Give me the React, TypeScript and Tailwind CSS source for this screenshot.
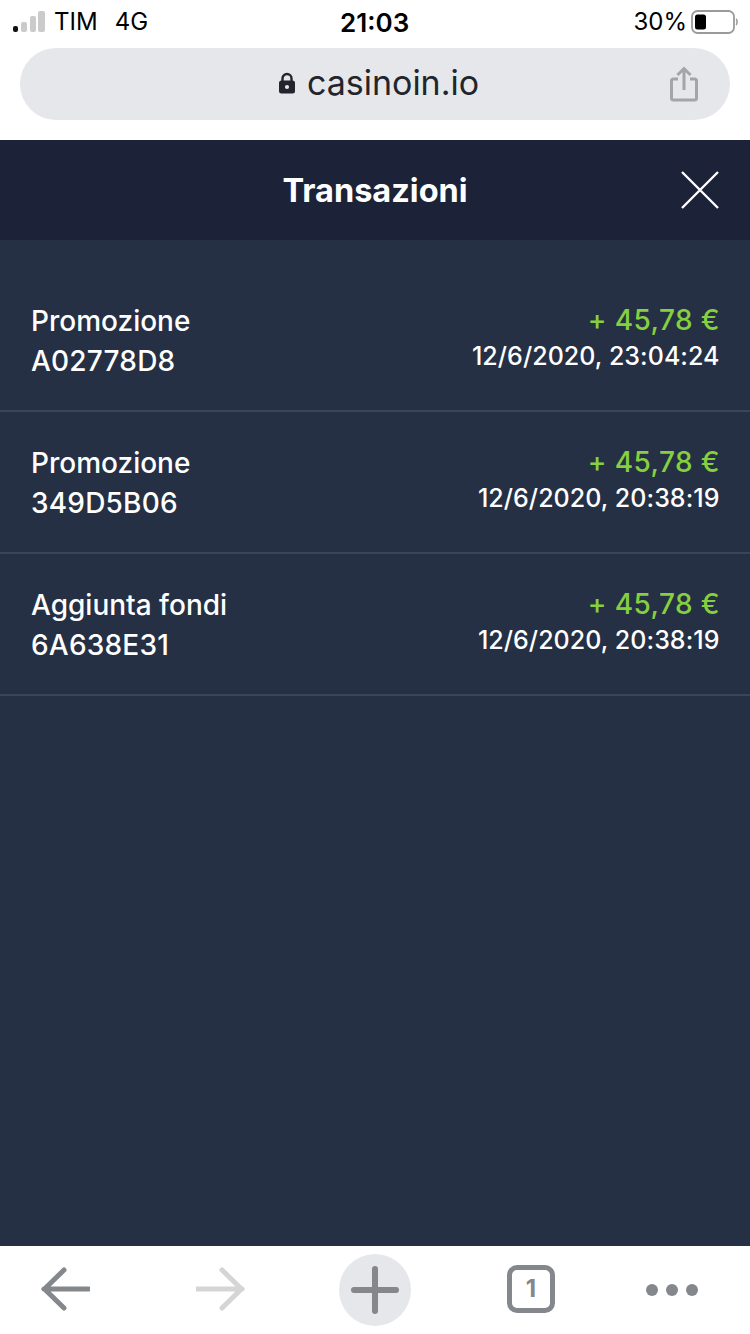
const rows = [
  { title: "Promozione", code: "A02778D8", amount: "+ 45,78 €", date: "12/6/2020, 23:04:24" },
  { title: "Promozione", code: "349D5B06", amount: "+ 45,78 €", date: "12/6/2020, 20:38:19" },
  { title: "Aggiunta fondi", code: "6A638E31", amount: "+ 45,78 €", date: "12/6/2020, 20:38:19" },
];

function Signal() {
  return (
    <svg width="33" height="22" viewBox="0 0 33 22" className="block">
      <rect x="0" y="15" width="5" height="6" rx="2" fill="#111" />
      <rect x="8" y="11" width="6" height="10" rx="2" fill="#cbcbcb" />
      <rect x="17" y="5" width="6" height="16" rx="2" fill="#cbcbcb" />
      <rect x="25" y="0" width="7" height="21" rx="2" fill="#cbcbcb" />
    </svg>
  );
}

function Battery() {
  return (
    <svg width="47" height="24" viewBox="0 0 47 24" className="block">
      <rect x="1" y="1" width="42" height="22" rx="5.5" fill="none" stroke="#9a9a9a" strokeWidth="1.8" />
      <rect x="4" y="4.5" width="11" height="15" rx="2.5" fill="#000" />
      <path d="M45 9c1.4.6 1.4 5.4 0 6" fill="none" stroke="#9a9a9a" strokeWidth="1.6" />
    </svg>
  );
}

export default function App() {
  return (
    <div className="flex h-[1334px] w-[750px] flex-col overflow-hidden bg-white font-['Inter',sans-serif]">
      <div className="flex h-[48px] items-center pb-[4px] pl-[13px] pr-[12px] text-[24px] text-black">
        <div className="flex w-[327px] items-center">
          <Signal />
          <span className="ml-[8px]">TIM</span>
          <span className="ml-[17px]">4G</span>
        </div>
        <div className="text-[26px] font-semibold">21:03</div>
        <div className="ml-auto flex items-center gap-[4px]">
          <span>30%</span>
          <Battery />
        </div>
      </div>
      <div className="px-[20px]">
        <div className="flex h-[72px] items-center rounded-[36px] bg-[#e6e7eb] pr-[32px]">
          <div className="flex flex-1 items-center justify-center pb-[3px] pl-[67px] text-[34px] text-[#22252b]">
            <svg width="18" height="22" viewBox="0 0 18 22" className="mr-[11px] mt-[1px]">
              <path d="M4.5 9V6.5a4.5 4.5 0 0 1 9 0V9" fill="none" stroke="#22252b" strokeWidth="2.4" />
              <rect x="1" y="8.5" width="16" height="13" rx="2.5" fill="#22252b" />
              <circle cx="9" cy="15" r="2.1" fill="#e6e7eb" />
            </svg>
            casinoin.io
          </div>
          <svg width="28" height="36" viewBox="0 0 28 36">
            <path d="M8 13H3.5a2 2 0 0 0-2 2v17a2 2 0 0 0 2 2h21a2 2 0 0 0 2-2V15a2 2 0 0 0-2-2H20" fill="none" stroke="#a3a5ab" strokeWidth="3" />
            <path d="M14 24V3M7.5 9L14 2.5 20.5 9" fill="none" stroke="#a3a5ab" strokeWidth="3" />
          </svg>
        </div>
      </div>
      <div className="relative mt-[20px] flex h-[100px] items-center justify-center bg-[#1c2238] pt-[2px]">
        <span className="text-[32.5px] font-bold text-white">Transazioni</span>
        <svg width="38" height="38" viewBox="0 0 38 38" className="absolute right-[31px] top-[31px]">
          <path d="M1 1l36 36M37 1L1 37" stroke="#fff" strokeWidth="2.4" />
        </svg>
      </div>
      <div className="flex-1 bg-[#253045] pt-[30px]">
        {rows.map((r) => (
          <div key={r.code} className="flex h-[142px] items-start justify-between border-b-2 border-[#3b4558] pl-[31px] pr-[30px] pt-[30px]">
            <div className="pt-[1px] text-[28px] leading-[40px] font-medium text-white">
              <div>{r.title}</div>
              <div className="tracking-[0.2px]">{r.code}</div>
            </div>
            <div className="text-right">
              <div className="text-[28px] leading-[40px] font-medium tracking-[0.4px] text-[#86cf3e]">{r.amount}</div>
              <div className="pr-[0.5px] text-[25px] leading-[32px] font-medium tracking-[0.05px] text-white">{r.date}</div>
            </div>
          </div>
        ))}
      </div>
      <div className="flex h-[88px] items-center bg-white pl-[40px]">
        <svg width="50" height="46" viewBox="0 0 50 46" className="mb-[2px]">
          <path d="M49 23H4M24 4L4.5 23 24 42" fill="none" stroke="#84878c" strokeWidth="5" strokeLinecap="round" />
        </svg>
        <svg width="50" height="46" viewBox="0 0 50 46" className="mb-[2px] ml-[106px]">
          <path d="M1 23h45M26 4l19.5 19L26 42" fill="none" stroke="#d5d5d5" strokeWidth="5" strokeLinecap="round" />
        </svg>
        <div className="ml-[93px] flex h-[72px] w-[72px] items-center justify-center rounded-full bg-[#e6e7eb]">
          <svg width="48" height="48" viewBox="0 0 48 48">
            <path d="M24 3v42M3 24h42" stroke="#84878c" strokeWidth="6" strokeLinecap="round" />
          </svg>
        </div>
        <div className="mb-[2px] ml-[96px] flex h-[48px] w-[48px] items-center justify-center rounded-[10px] border-[5px] border-[#84878c] text-[24px] font-bold text-[#84878c]">1</div>
        <div className="ml-[91px] flex w-[52px] gap-[8px]">
          <div className="h-[12px] w-[12px] rounded-full bg-[#84878c]" />
          <div className="h-[12px] w-[12px] rounded-full bg-[#84878c]" />
          <div className="h-[12px] w-[12px] rounded-full bg-[#84878c]" />
        </div>
      </div>
    </div>
  );
}
